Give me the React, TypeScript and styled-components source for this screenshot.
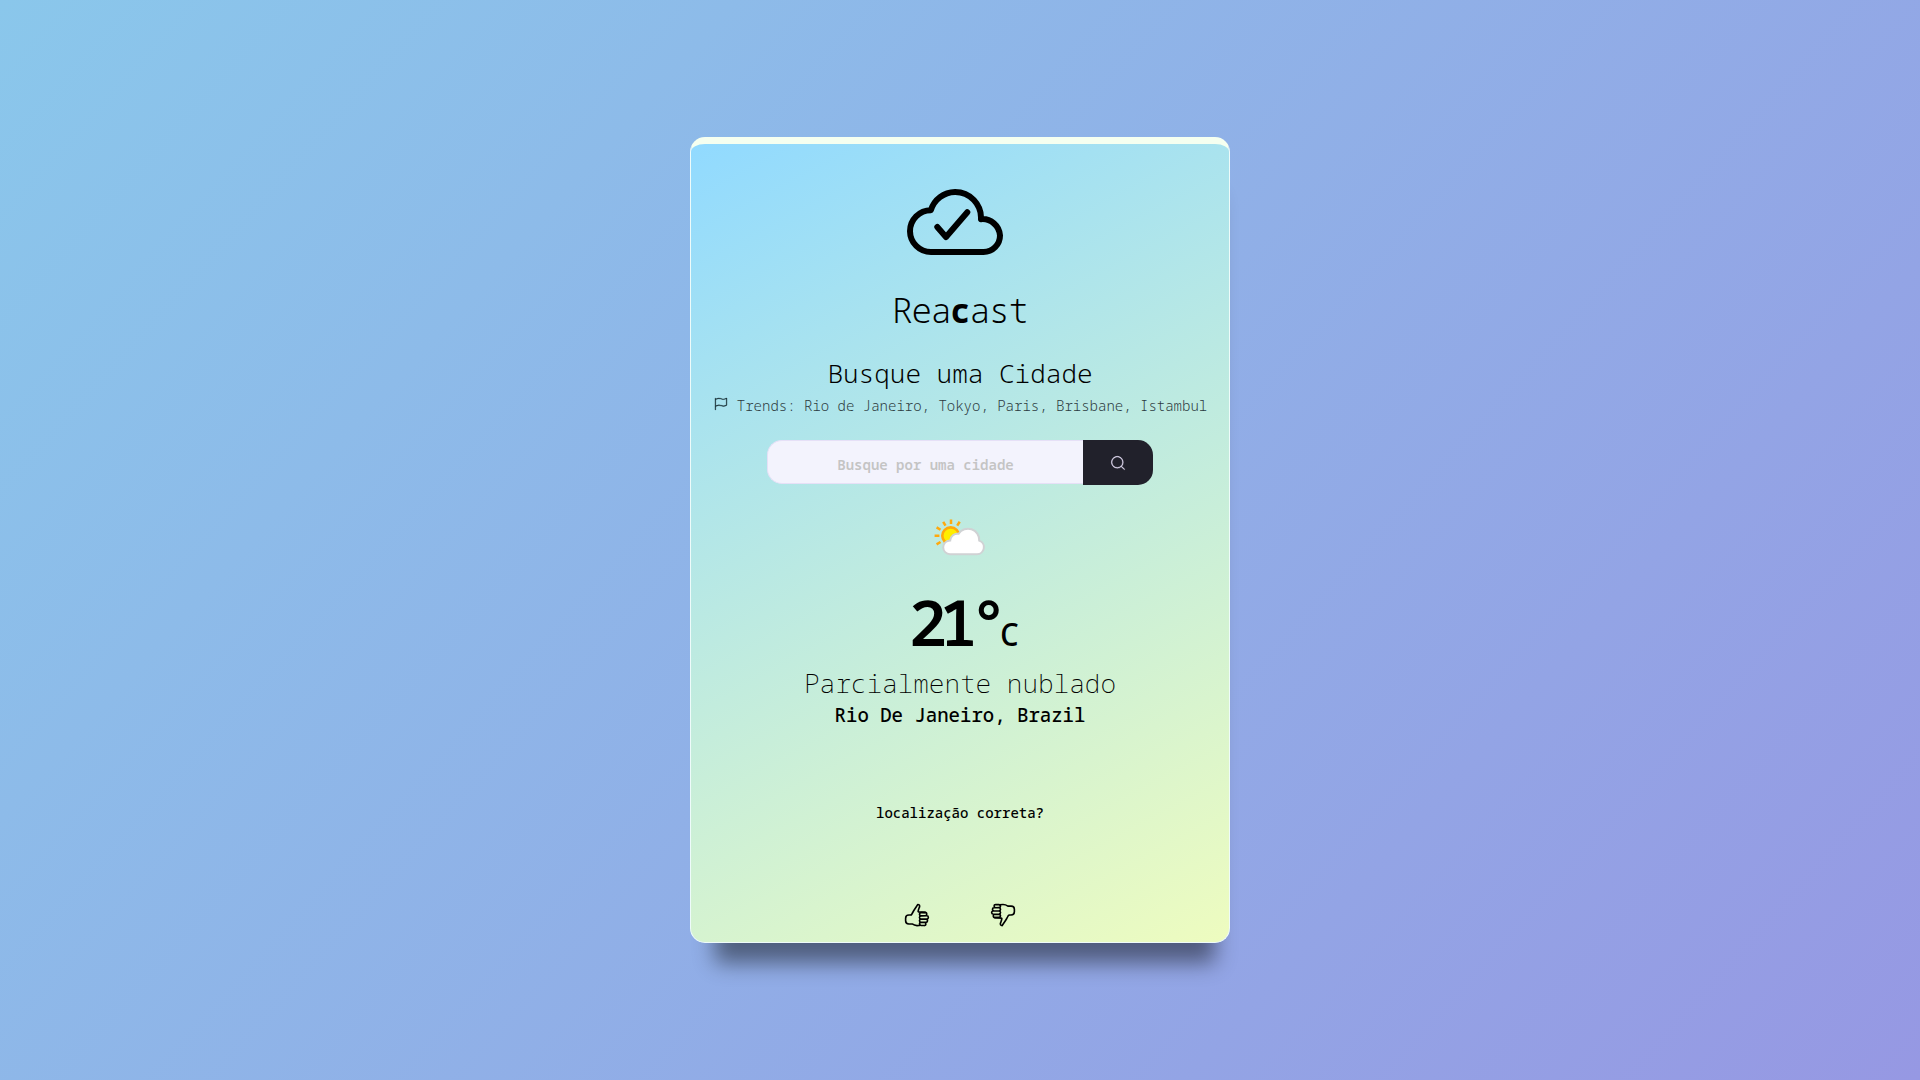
import React, { useState } from 'react';
import styled, { createGlobalStyle } from 'styled-components';
import { CiFlag1, CiSearch } from 'react-icons/ci';
import { IoThumbsUpOutline, IoThumbsDownOutline } from 'react-icons/io5';

const GlobalStyle = createGlobalStyle`
  * {
    box-sizing: border-box;
    margin: 0;
    padding: 0;
  }

  body {
    font-family: 'Noto Sans Mono', 'DejaVu Sans Mono', monospace;
    color: #000;
  }
`;

const Page = styled.div`
  min-height: 100vh;
  display: flex;
  align-items: center;
  justify-content: center;
  background: linear-gradient(132deg, #8ac7eb, #9698e3);
`;

const Card = styled.main`
  width: 100%;
  max-width: 540px;
  display: flex;
  flex-direction: column;
  align-items: center;
  padding: 33px 12px 14px;
  text-align: center;
  border: 1px solid #eefbfa;
  border-top: 7px solid #f5fff0;
  border-radius: 15px;
  background: linear-gradient(152deg, #91daff, #eefcbf);
  box-shadow: 5px 40px 20px -20px rgba(0, 0, 0, 0.45);
`;

const Brand = styled.h1`
  margin-top: 13px;
  font-size: 34px;
  line-height: 48px;
  font-weight: 300;
  letter-spacing: -1px;

  strong {
    font-weight: 700;
  }
`;

const Heading = styled.h2<{ $weight: number }>`
  font-size: 26px;
  line-height: 32px;
  font-weight: ${({ $weight }) => $weight};
`;

const SearchSection = styled.section`
  margin-top: 23px;
  display: flex;
  flex-direction: column;
  align-items: center;
`;

const Trends = styled.p`
  margin-top: 7px;
  display: flex;
  gap: 8px;
  font-size: 14px;
  line-height: 20px;
  font-weight: 300;
  color: #2c3a40;

  svg {
    flex: none;
    color: #12282e;
  }
`;

const SearchForm = styled.form`
  margin-top: 24px;
  display: flex;
  align-items: flex-start;
`;

const SearchInput = styled.input`
  width: 316px;
  height: 44px;
  padding: 4px 10px 0;
  border: 1px solid #e6e0f7;
  border-right-width: 0;
  border-radius: 15px 0 0 15px;
  background: #f3f3fd;
  font: 600 14px 'Noto Sans Mono', monospace;
  text-align: center;
  color: #21212b;
  outline: none;

  &::placeholder {
    color: #c4c4c4;
    opacity: 1;
  }
`;

const SearchButton = styled.button`
  width: 70px;
  height: 45px;
  display: flex;
  align-items: center;
  justify-content: center;
  border: none;
  border-radius: 0 15px 15px 0;
  background: #21212b;
  color: #e6e0f7;
  cursor: pointer;
`;

const Weather = styled.section`
  margin-top: 20px;
  display: flex;
  flex-direction: column;
  align-items: center;
`;

const Temperature = styled.p`
  margin: 13px 0 5px;
  font-size: 64px;
  line-height: 80px;
  font-weight: 600;
  letter-spacing: -8px;

  span {
    font-size: 32px;
    line-height: 32px;
    font-weight: 500;
  }
`;

const Place = styled.p`
  margin-top: 4px;
  font-size: 19px;
  line-height: 24px;
  font-weight: 500;
`;

const Question = styled.p`
  margin-top: 76px;
  font-size: 14px;
  line-height: 20px;
  font-weight: 500;
`;

const Answers = styled.div`
  margin-top: 79px;
  display: flex;
  gap: 60px;
`;

const AnswerButton = styled.button`
  display: flex;
  border: none;
  background: none;
  color: #000;
  cursor: pointer;
`;

function CloudCheck() {
  return (
    <svg
      width="106"
      height="96"
      viewBox="0 0 106 96"
      fill="none"
      stroke="currentColor"
      strokeWidth="6"
      strokeLinecap="round"
      strokeLinejoin="round"
      aria-hidden="true"
    >
      <path d="M24 75A21 21 0 0 1 3 54.2A21 21 0 0 1 23.9 33.2A25.7 25.7 0 0 1 48 15A25.9 25.9 0 0 1 74 42.2A17.5 17.5 0 0 1 93 58.5A16.5 16.5 0 0 1 76.5 75Z" />
      <path d="M30.3 50L39 60L60.3 35.3" />
    </svg>
  );
}

function PartlyCloudy() {
  return (
    <svg width="64" height="64" viewBox="0 0 64 64" role="img" aria-label="Parcialmente nublado">
      <g stroke="#ffa90d" strokeWidth="2.5">
        <path d="M23 14.5v4.6M15.2 16.8l2.3 3.8M31.7 16.8l-2.5 3.8M8.6 22.4l3.9 2.4M6.6 30.7h4.8M8.6 39.4l3.9-2.4" />
        <circle cx="22.7" cy="30.8" r="8.4" fill="#ffee00" strokeWidth="2.6" />
      </g>
      <path
        d="M22 49.2H49A7 7 0 0 0 51.2 35.6A11.2 11.2 0 0 0 30.6 28.8A7.2 7.2 0 0 0 22.2 35.4A6.9 6.9 0 0 0 22 49.2Z"
        fill="#fff"
        stroke="#d0d2d4"
        strokeWidth="2"
      />
    </svg>
  );
}

export default function App() {
  const [city, setCity] = useState('');

  return (
    <>
      <GlobalStyle />
      <Page>
        <Card>
          <CloudCheck />
          <Brand>
            Rea<strong>c</strong>ast
          </Brand>

          <SearchSection>
            <Heading $weight={300}>Busque uma Cidade</Heading>
            <Trends>
              <CiFlag1 size={16} strokeWidth={0.5} aria-hidden />
              Trends: Rio de Janeiro, Tokyo, Paris, Brisbane, Istambul
            </Trends>
            <SearchForm onSubmit={(event) => event.preventDefault()}>
              <SearchInput
                type="text"
                aria-label="Cidade"
                placeholder="Busque por uma cidade"
                value={city}
                onChange={(event) => setCity(event.target.value)}
              />
              <SearchButton type="submit" aria-label="Buscar">
                <CiSearch size={18} strokeWidth={0.5} />
              </SearchButton>
            </SearchForm>
          </SearchSection>

          <Weather>
            <PartlyCloudy />
            <Temperature>
              21°<span>C</span>
            </Temperature>
            <Heading as="h3" $weight={200}>
              Parcialmente nublado
            </Heading>
            <Place>Rio De Janeiro, Brazil</Place>
          </Weather>

          <Question>localização correta?</Question>
          <Answers>
            <AnswerButton type="button" aria-label="Sim">
              <IoThumbsUpOutline size={26} />
            </AnswerButton>
            <AnswerButton type="button" aria-label="Não">
              <IoThumbsDownOutline size={26} />
            </AnswerButton>
          </Answers>
        </Card>
      </Page>
    </>
  );
}
